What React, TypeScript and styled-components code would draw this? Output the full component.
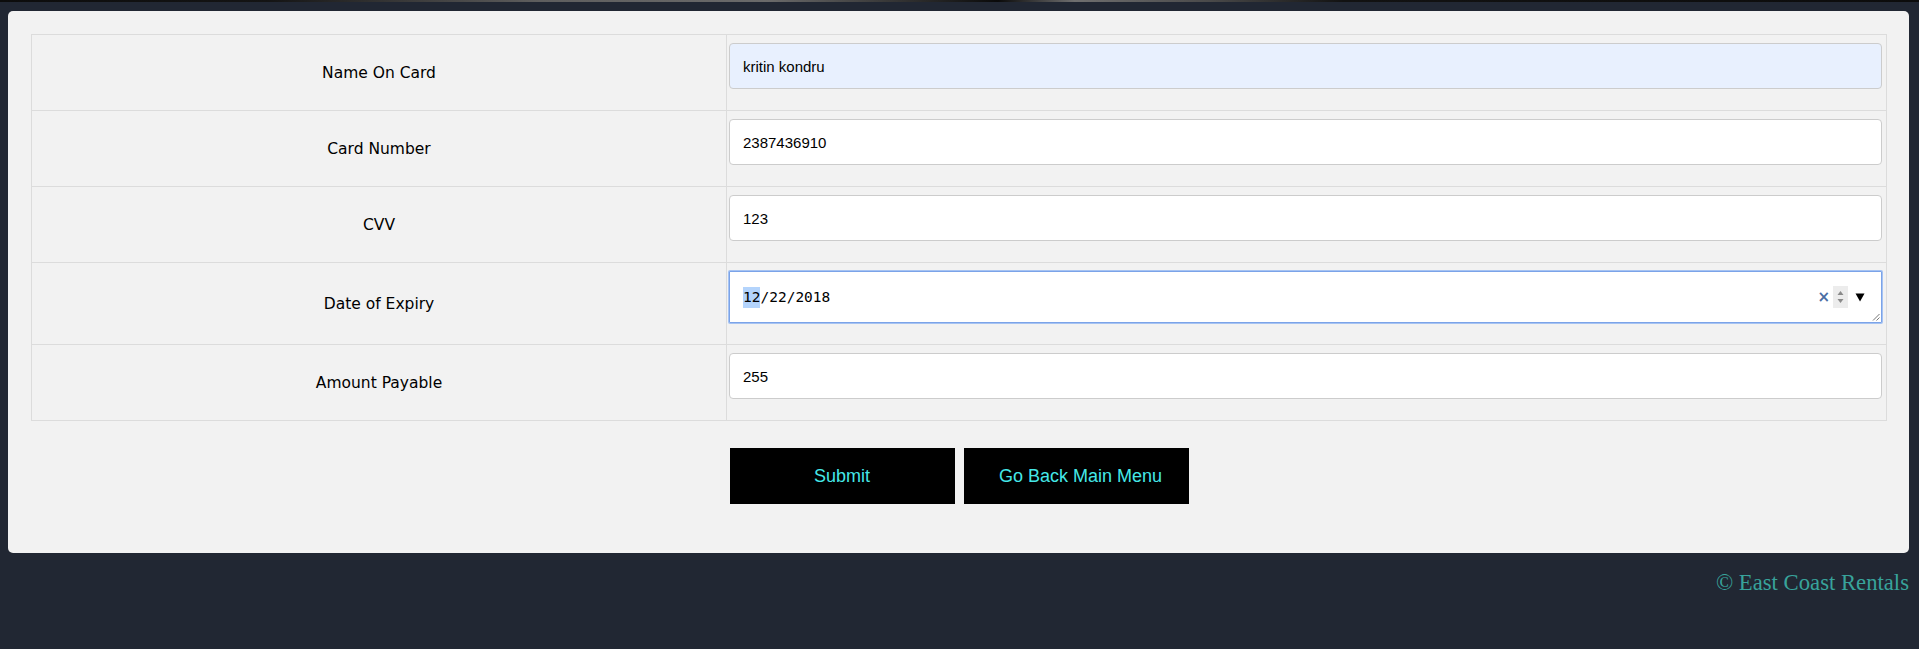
import React from "react";
import styled, { createGlobalStyle } from "styled-components";

const GlobalStyle = createGlobalStyle`
  html, body {
    margin: 0;
    padding: 0;
    background: #212733;
  }
  body {
    font-family: "Liberation Sans", Arial, sans-serif;
  }
  * { box-sizing: border-box; }
`;

const Page = styled.div`
  min-height: 649px;
  background: #212733;
  overflow: hidden;
`;

const TopStrip = styled.div`
  height: 2px;
  background: linear-gradient(
    90deg,
    #0c0c0c 0%,
    #141414 14%,
    #5e5e5e 28%,
    #6a6a6a 40%,
    #3a3a3a 46%,
    #0a0a0a 52%,
    #6f6f6f 56%,
    #4a4a4a 63%,
    #121212 70%,
    #0c0c0c 100%
  );
`;

const Panel = styled.main`
  margin: 9px 10px 0 8px;
  background: #f2f2f2;
  border-radius: 5px;
  padding: 23px 22px 49px 23px;
`;

const FormGrid = styled.div`
  display: grid;
  grid-template-columns: 695px 1fr;
  border: 1px solid #dcdcdc;
`;

const LabelCell = styled.div<{ $last?: boolean }>`
  display: flex;
  align-items: center;
  justify-content: center;
  border-right: 1px solid #dcdcdc;
  border-bottom: ${(p) => (p.$last ? "none" : "1px solid #dcdcdc")};
  font-family: "DejaVu Sans", Verdana, sans-serif;
  font-size: 15.5px;
  color: #000;
`;

const FieldCell = styled.div<{ $last?: boolean }>`
  border-bottom: ${(p) => (p.$last ? "none" : "1px solid #dcdcdc")};
  padding: 8px 4px 21px 2px;
`;

const TextInput = styled.input<{ $autofill?: boolean }>`
  display: block;
  width: 100%;
  height: 46px;
  margin: 0;
  padding: 0 13px;
  border: 1px solid #cccccc;
  border-radius: 4px;
  background: ${(p) => (p.$autofill ? "#e8f0fe" : "#ffffff")};
  font-family: "Liberation Sans", Arial, sans-serif;
  font-size: 15px;
  color: #000;
  outline: none;
`;

const DateField = styled.div`
  position: relative;
  display: flex;
  align-items: center;
  height: 52px;
  padding: 0 14px 0 13px;
  background: #fff;
  border: 1px solid #7ba3e8;
  box-shadow: 0 0 0 1px #a6c3f2;
  border-radius: 1px;
`;

const DateText = styled.span`
  flex: 1;
  font-family: "DejaVu Sans Mono", "Liberation Mono", monospace;
  font-size: 14.5px;
  color: #000;
  line-height: 21px;
`;

const Selected = styled.span`
  background: #b4d4fc;
  display: inline-block;
  line-height: 21px;
`;

const DateControls = styled.div`
  display: flex;
  align-items: center;
  gap: 2px;
`;

const ClearMark = styled.span`
  font-family: "DejaVu Sans", sans-serif;
  font-weight: bold;
  font-size: 15px;
  color: #4a6da3;
  line-height: 1;
  margin-right: 1px;
`;

const Spinner = styled.div`
  width: 15px;
  height: 22px;
  background: #ececec;
  display: flex;
  align-items: center;
  justify-content: center;
`;

const DropArrow = styled.div`
  width: 14px;
  display: flex;
  justify-content: center;
  margin-left: 3px;
`;

const ResizeGrip = styled.svg`
  position: absolute;
  right: 1px;
  bottom: 1px;
`;

const ButtonRow = styled.div`
  display: flex;
  justify-content: center;
  gap: 9px;
  margin-top: 27px;
`;

const ActionButton = styled.button<{ $indent?: number }>`
  width: 225px;
  height: 56px;
  border: none;
  border-radius: 0;
  padding: 0 0 0 ${(p) => p.$indent ?? 0}px;
  background: #000;
  color: #45e8e8;
  font-family: "Liberation Sans", Arial, sans-serif;
  font-size: 18px;
  cursor: pointer;
`;

const Footer = styled.footer`
  margin-top: 17px;
  padding-right: 10px;
  text-align: right;
  font-family: "Liberation Serif", "Times New Roman", serif;
  font-size: 22.7px;
  color: #38a39b;
`;

const textRows = [
  { label: "Name On Card", value: "kritin kondru", autofill: true },
  { label: "Card Number", value: "2387436910" },
  { label: "CVV", value: "123" },
];

export default function App() {
  return (
    <Page>
      <GlobalStyle />
      <TopStrip />
      <Panel>
        <FormGrid>
          {textRows.map((r) => (
            <React.Fragment key={r.label}>
              <LabelCell>{r.label}</LabelCell>
              <FieldCell>
                <TextInput readOnly value={r.value} $autofill={r.autofill} />
              </FieldCell>
            </React.Fragment>
          ))}
          <LabelCell>Date of Expiry</LabelCell>
          <FieldCell>
            <DateField>
              <DateText>
                <Selected>12</Selected>/22/2018
              </DateText>
              <DateControls>
                <ClearMark>×</ClearMark>
                <Spinner>
                  <svg width="7" height="14" viewBox="0 0 7 14">
                    <path d="M3.5 1 L6.5 5 L0.5 5 Z" fill="#8a8a8a" />
                    <path d="M3.5 13 L6.5 9 L0.5 9 Z" fill="#8a8a8a" />
                  </svg>
                </Spinner>
                <DropArrow>
                  <svg width="10" height="10" viewBox="0 0 10 10">
                    <path d="M0.5 1.5 L9.5 1.5 L5 9.5 Z" fill="#000" />
                  </svg>
                </DropArrow>
              </DateControls>
              <ResizeGrip width="8" height="8" viewBox="0 0 8 8">
                <path d="M7.5 1 L1 7.5 M7.5 4.5 L4.5 7.5" stroke="#777" strokeWidth="1" />
              </ResizeGrip>
            </DateField>
          </FieldCell>
          <LabelCell $last>Amount Payable</LabelCell>
          <FieldCell $last>
            <TextInput readOnly value="255" />
          </FieldCell>
        </FormGrid>
        <ButtonRow>
          <ActionButton type="button">Submit</ActionButton>
          <ActionButton type="button" $indent={9}>
            Go Back Main Menu
          </ActionButton>
        </ButtonRow>
      </Panel>
      <Footer>© East Coast Rentals</Footer>
    </Page>
  );
}
